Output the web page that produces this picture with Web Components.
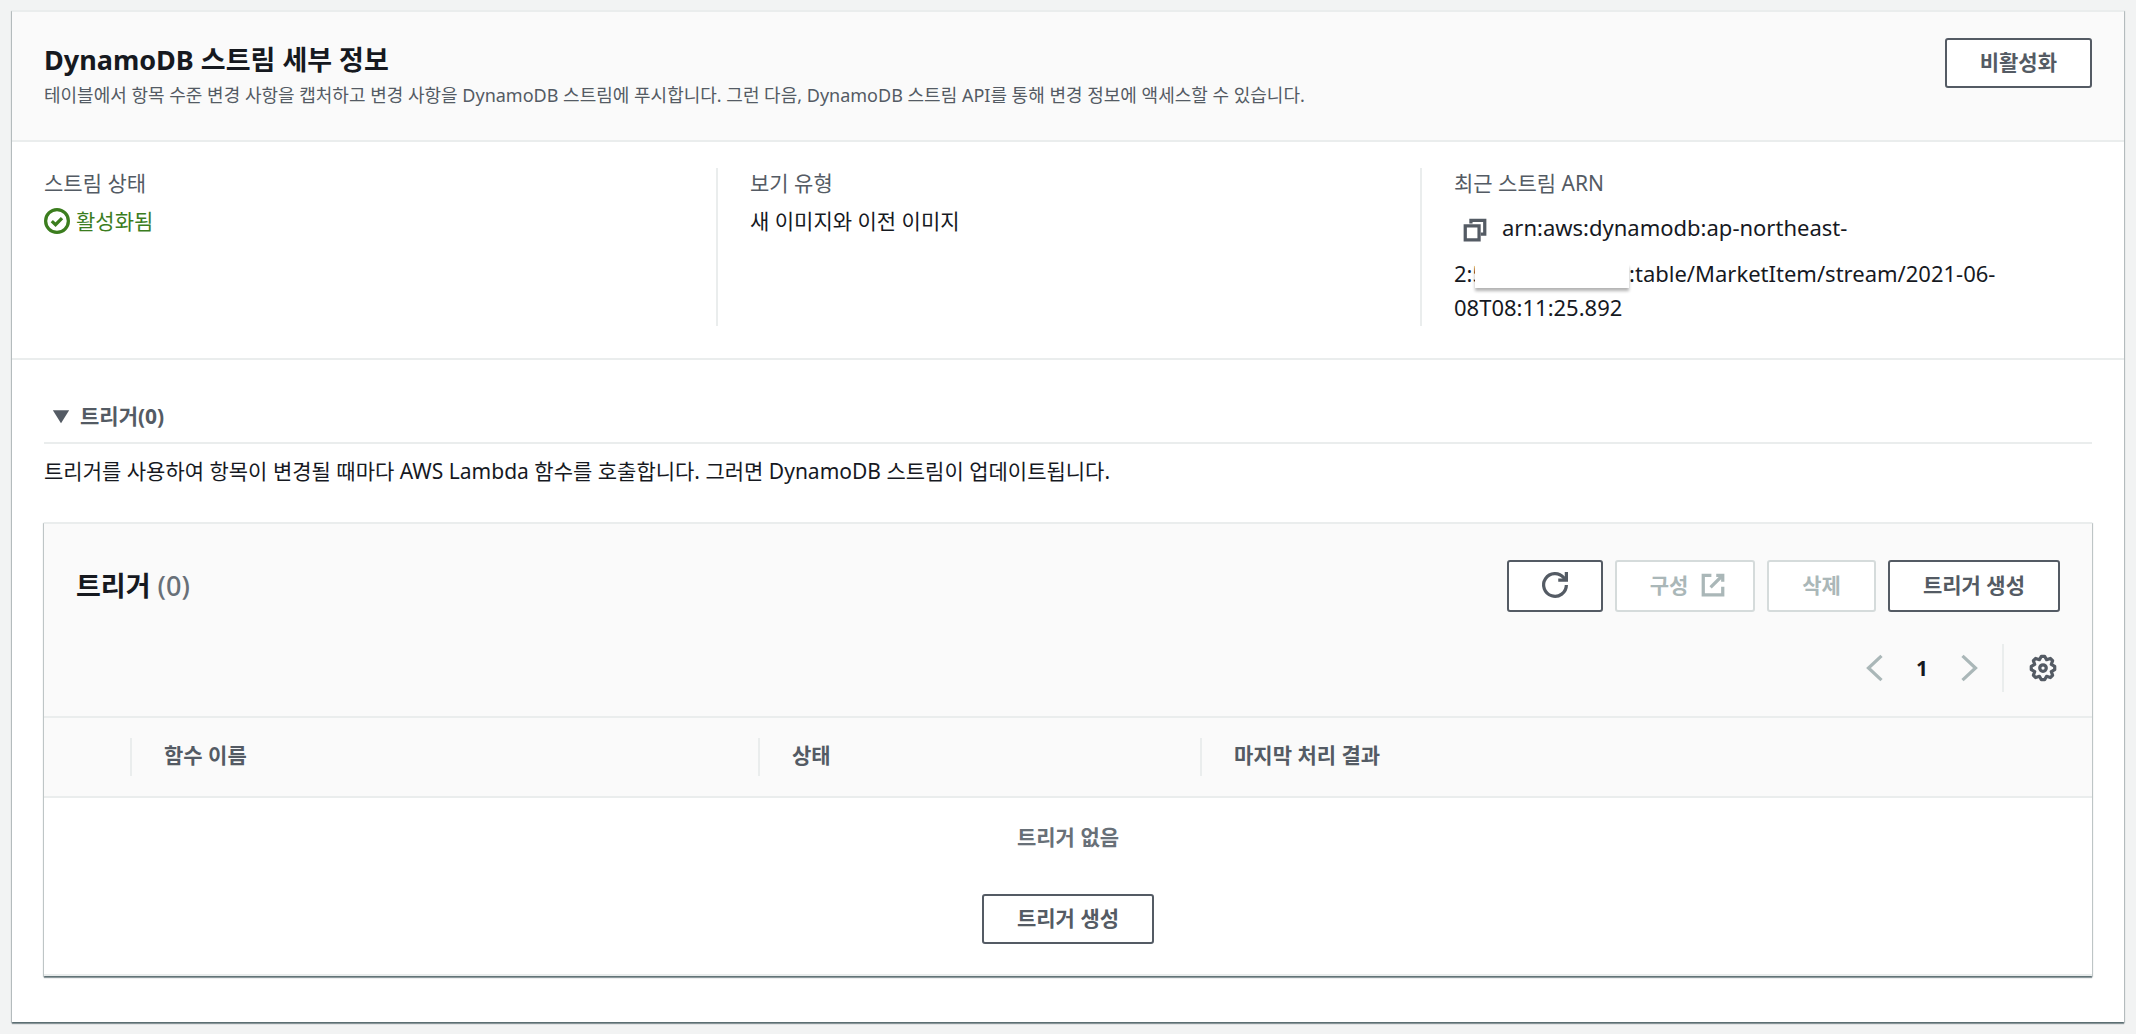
<!DOCTYPE html>
<html lang="ko">
<head>
<meta charset="utf-8">
<title>DynamoDB 스트림 세부 정보</title>
<style>
  body {
    margin: 0;
    padding: 10px 12px;
    background: #f2f3f3;
    color: #16191f;
    font: 21px/34px 'Noto Sans', 'Noto Sans CJK KR', sans-serif;
  }
</style>
</head>
<body>
<stream-details></stream-details>

<script>
// Iconos, todos sobre una cuadricula de 16x16
const ICONS = {
  check: '<circle cx="8" cy="8" r="7"/><path d="M4.8 8.1l2.3 2.2 4-4.1"/>',
  copy: '<path d="M5.5 4V2H14v8.5h-2.5"/><path d="M2 5.5h8.5V14H2z"/>',
  refresh: '<path d="M10 5h5V0"/><path d="M15 8a7 7 0 1 1-1.6-4.5L15 5"/>',
  external: '<path d="M10 2h4v4"/><path d="M6.5 9.5L14 2"/><path d="M14 9v5H2V2h5"/>',
  prev: '<path d="M12 .5L4 8l8 7.5"/>',
  next: '<path d="M4 .5L12 8l-8 7.5"/>',
  down: '<path fill="currentColor" stroke="none" d="M3 4.500h10L8 12.500z"/>',
  gear: '<circle cx="8" cy="8" r="2"/><path stroke-linejoin="round" d="M7 .8h2l1.200 2.100 2.300-.8 1.400 1.400-.8 2.300 2.100 1.200v2l-2.100 1.200.8 2.300-1.400 1.400-2.300-.8L9 15.200H7l-1.200-2.100-2.300.8-1.400-1.400.8-2.300L.8 9V7l2.100-1.200-.8-2.300 1.400-1.400 2.300.8z"/>'
}

// Icono
class ConsoleIcon extends HTMLElement {
  constructor () {
    super()
    this.attachShadow({ mode: 'open' })
  }

  static Styles = /* Css */`
    :host{
      display: inline-block;
      width: 26px;
      height: 26px;
      flex: none;
    }
    :host([end]){
      margin-right: -6px;
    }
    svg{
      display: block;
      width: 100%;
      height: 100%;
      fill: none;
      stroke: currentColor;
      stroke-width: 2;
      overflow: visible;
    }
  `
  connectedCallback () {
    this.shadowRoot.innerHTML = /* HTML */`
      <style>${ConsoleIcon.Styles}</style>
      <svg viewBox="0 0 16 16" aria-hidden="true">${ICONS[this.getAttribute('name')]}</svg>
    `
  }
}
customElements.define('console-icon', ConsoleIcon)

// Boton con borde, o solo icono con el atributo "plain"
class ConsoleButton extends HTMLElement {
  constructor () {
    super()
    this.attachShadow({ mode: 'open' })
  }

  static Styles = /* Css */`
    :host{
      display: inline-flex;
      flex: none;
    }
    button{
      display: inline-flex;
      align-items: center;
      justify-content: center;
      gap: 12px;
      min-height: var(--button-height, 50px);
      padding: 0 33px 2px;
      border: 2px solid #545b64;
      border-radius: 3px;
      background: #fff;
      color: #545b64;
      font: inherit;
      font-weight: 700;
      line-height: 34px;
      cursor: pointer;
    }
    button:disabled{
      border-color: #d5dbdb;
      color: #aab7b8;
      cursor: default;
    }
    :host([plain]) button{
      min-height: 0;
      padding: 0;
      border: 0;
      background: none;
    }
  `
  connectedCallback () {
    const label = this.getAttribute('label')
    this.shadowRoot.innerHTML = /* HTML */`
      <style>${ConsoleButton.Styles}</style>
      <button type="button" ${label ? `aria-label="${label}"` : ''} ${this.hasAttribute('disabled') ? 'disabled' : ''}><slot></slot></button>
    `
  }
}
customElements.define('console-button', ConsoleButton)

// Contenedor con cabecera gris
class ConsolePanel extends HTMLElement {
  constructor () {
    super()
    this.attachShadow({ mode: 'open' })
  }

  static Styles = /* Css */`
    :host{
      display: block;
      border-top: 2px solid #eaeded;
      background: #fff;
      box-shadow: 0 2px 1px 0 rgba(0, 28, 36, .4), 1px 1px 1px 0 rgba(0, 28, 36, .2), -1px 1px 1px 0 rgba(0, 28, 36, .2);
    }
    header{
      border-bottom: 2px solid #eaeded;
      background: #fafafa;
    }
  `
  connectedCallback () {
    this.shadowRoot.innerHTML = /* HTML */`
      <style>${ConsolePanel.Styles}</style>
      <header><slot name="header"></slot></header>
      <slot></slot>
    `
  }
}
customElements.define('console-panel', ConsolePanel)

// Etiqueta y valor
class KeyValue extends HTMLElement {
  constructor () {
    super()
    this.attachShadow({ mode: 'open' })
  }

  static Styles = /* Css */`
    :host{
      display: block;
      padding: 0 32px;
      border-left: 2px solid #eaeded;
    }
    :host(:first-child){
      border-color: transparent;
      padding-left: 30px;
    }
    .key{
      margin-bottom: 6px;
      color: #545b64;
      line-height: 30px;
    }
  `
  connectedCallback () {
    this.shadowRoot.innerHTML = /* HTML */`
      <style>${KeyValue.Styles}</style>
      <div class="key">${this.getAttribute('label')}</div>
      <div><slot></slot></div>
    `
  }
}
customElements.define('key-value', KeyValue)

// Seccion plegable
class ExpandSection extends HTMLElement {
  constructor () {
    super()
    this.attachShadow({ mode: 'open' })
  }

  static Styles = /* Css */`
    :host{
      display: block;
    }
    button{
      display: flex;
      align-items: center;
      gap: 6px;
      width: 100%;
      height: 52px;
      padding: 0 4px 2px;
      border: 0;
      border-bottom: 2px solid #eaeded;
      background: none;
      color: #545b64;
      font: inherit;
      font-weight: 700;
      cursor: pointer;
    }
    .content{
      padding-top: 10px;
    }
  `
  connectedCallback () {
    this.shadowRoot.innerHTML = /* HTML */`
      <style>${ExpandSection.Styles}</style>
      <button type="button" aria-expanded="true"><console-icon name="down"></console-icon>${this.getAttribute('label')}</button>
      <div class="content"><slot></slot></div>
    `
    const button = this.shadowRoot.querySelector('button')
    const content = this.shadowRoot.querySelector('.content')
    button.addEventListener('click', () => {
      content.hidden = !content.hidden
      button.setAttribute('aria-expanded', String(!content.hidden))
    })
  }
}
customElements.define('expand-section', ExpandSection)

// Tabla de triggers
class TriggerTable extends HTMLElement {
  columns = ['함수 이름', '상태', '마지막 처리 결과']

  constructor () {
    super()
    this.attachShadow({ mode: 'open' })
  }

  static Styles = /* Css */`
    :host{
      display: block;
    }
    .head{
      padding: 36px 32px 24px;
    }
    .bar, .actions, .pages{
      display: flex;
      align-items: center;
    }
    .bar{
      justify-content: space-between;
      margin-bottom: 32px;
    }
    .actions{
      --button-height: 52px;
      gap: 12px;
    }
    h3{
      margin: 0;
      font-size: 27px;
      line-height: 36px;
    }
    h3 span{
      color: #687078;
      font-weight: 500;
    }
    .pages{
      justify-content: flex-end;
      gap: 28px;
    }
    .settings{
      display: flex;
      align-items: center;
      height: 48px;
      padding: 0 4px 0 26px;
      border-left: 2px solid #eaeded;
      margin-left: -8px;
    }
    table{
      width: 100%;
      border-collapse: separate;
      border-spacing: 0;
      table-layout: fixed;
    }
    th{
      height: 78px;
      padding: 0;
      border-bottom: 2px solid #eaeded;
      background: #fafafa;
      color: #545b64;
      text-align: left;
    }
    th div{
      height: 38px;
      padding-left: 32px;
      border-right: 2px solid #eaeded;
    }
    th:last-child div{
      border: 0;
    }
    .check{
      width: 88px;
    }
    .name{
      width: 628px;
    }
    .state{
      width: 442px;
    }
    td{
      padding: 22px 32px 30px;
      border-bottom: 2px solid #eaeded;
      text-align: center;
    }
    .empty{
      display: flex;
      flex-direction: column;
      align-items: center;
      gap: 40px;
      color: #687078;
      font-weight: 700;
    }
  `
  connectedCallback () {
    this.shadowRoot.innerHTML = /* HTML */`
      <style>${TriggerTable.Styles}</style>
      <console-panel>
        <div class="head" slot="header">
          <div class="bar">
            <h3>트리거 <span>(0)</span></h3>
            <div class="actions">
              <console-button label="새로 고침"><console-icon name="refresh"></console-icon></console-button>
              <console-button disabled>구성 <console-icon name="external" end></console-icon></console-button>
              <console-button disabled>삭제</console-button>
              <console-button>트리거 생성</console-button>
            </div>
          </div>
          <div class="pages">
            <console-button plain disabled label="이전 페이지"><console-icon name="prev"></console-icon></console-button>
            <b>1</b>
            <console-button plain disabled label="다음 페이지"><console-icon name="next"></console-icon></console-button>
            <div class="settings"><console-button plain label="설정"><console-icon name="gear"></console-icon></console-button></div>
          </div>
        </div>
        <table>
          <colgroup><col class="check"><col class="name"><col class="state"><col></colgroup>
          <thead>
            <tr><th><div></div></th>${this.columns.map(c => `<th scope="col"><div>${c}</div></th>`).join('')}</tr>
          </thead>
          <tbody>
            <tr><td colspan="4"><div class="empty">트리거 없음<console-button>트리거 생성</console-button></div></td></tr>
          </tbody>
        </table>
      </console-panel>
    `
  }
}
customElements.define('trigger-table', TriggerTable)

// Pagina completa
class StreamDetails extends HTMLElement {
  constructor () {
    super()
    this.attachShadow({ mode: 'open' })
  }

  static Styles = /* Css */`
    :host{
      display: block;
    }
    .title{
      display: flex;
      justify-content: space-between;
      align-items: flex-start;
      padding: 26px 32px 30px;
    }
    h2{
      margin: 0 0 2px;
      padding-top: 4px;
      font-size: 27px;
      line-height: 36px;
    }
    p{
      margin: 0;
    }
    .title p{
      color: #545b64;
      font-size: 18px;
      line-height: 30px;
    }
    .info{
      display: grid;
      grid-template-columns: repeat(3, 1fr);
      padding: 26px 0 32px;
      border-bottom: 2px solid #eaeded;
    }
    .status{
      display: flex;
      align-items: center;
      gap: 6px;
      color: #3b7d1e;
    }
    .arn{
      padding-bottom: 2px;
      font-size: 22px;
    }
    .copy{
      align-items: center;
      height: 52px;
      margin: 0 14px 0 8px;
      vertical-align: middle;
    }
    /* parche blanco sobre el numero de cuenta */
    .mask{
      display: inline-block;
      width: 154px;
      height: 24px;
      margin-left: -10px;
      background: #fff;
      box-shadow: 0 3px 3px rgba(0, 0, 0, .3);
      vertical-align: middle;
    }
    .triggers{
      padding: 32px 32px 46px;
    }
    trigger-table{
      margin-top: 34px;
    }
  `
  connectedCallback () {
    this.shadowRoot.innerHTML = /* HTML */`
      <style>${StreamDetails.Styles}</style>
      <console-panel>
        <div class="title" slot="header">
          <div>
            <h2>DynamoDB 스트림 세부 정보</h2>
            <p>테이블에서 항목 수준 변경 사항을 캡처하고 변경 사항을 DynamoDB 스트림에 푸시합니다. 그런 다음, DynamoDB 스트림 API를 통해 변경 정보에 액세스할 수 있습니다.</p>
          </div>
          <console-button>비활성화</console-button>
        </div>
        <div class="info">
          <key-value label="스트림 상태"><span class="status"><console-icon name="check"></console-icon>활성화됨</span></key-value>
          <key-value label="보기 유형">새 이미지와 이전 이미지</key-value>
          <key-value label="최근 스트림 ARN"><div class="arn"><console-button class="copy" plain label="복사"><console-icon name="copy"></console-icon></console-button>arn:aws:dynamodb:ap-northeast-<br>2:5<span class="mask"></span>:table/MarketItem/stream/2021-06-<br>08T08:11:25.892</div></key-value>
        </div>
        <div class="triggers">
          <expand-section label="트리거(0)">
            <p>트리거를 사용하여 항목이 변경될 때마다 AWS Lambda 함수를 호출합니다. 그러면 DynamoDB 스트림이 업데이트됩니다.</p>
            <trigger-table></trigger-table>
          </expand-section>
        </div>
      </console-panel>
    `
  }
}
customElements.define('stream-details', StreamDetails)
</script>
</body>
</html>
